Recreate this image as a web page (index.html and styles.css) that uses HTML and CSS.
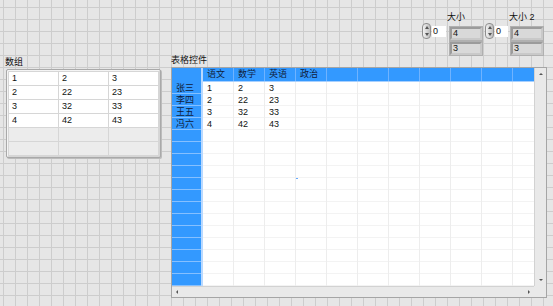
FILE: index.html
```html
<!DOCTYPE html>
<html lang="zh">
  <head>
    <meta charset="UTF-8" />
    <title>前面板</title>
    <link rel="stylesheet" href="styles.css">
  </head>
  <body>
    <div class="panel">

      <!-- 大小 -->
      <div class="ctl size-ctl size-a">
        <div class="caption size-cap">大小</div>
        <div class="size-row">
          <div class="spin"><span class="up"></span><span class="down"></span></div>
          <div class="numbox">0</div>
          <div class="disp-col">
            <div class="disp">4</div>
            <div class="disp">3</div>
          </div>
        </div>
      </div>

      <!-- 大小 2 -->
      <div class="ctl size-ctl size-b">
        <div class="caption size-cap">大小 2</div>
        <div class="size-row">
          <div class="spin"><span class="up"></span><span class="down"></span></div>
          <div class="numbox">0</div>
          <div class="disp-col">
            <div class="disp">4</div>
            <div class="disp">3</div>
          </div>
        </div>
      </div>

      <!-- 数组 -->
      <div class="ctl array-ctl">
        <div class="caption">数组</div>
        <div class="array-frame">
          <div class="array-grid">
            <div class="cell">1</div><div class="cell">2</div><div class="cell">3</div>
            <div class="cell">2</div><div class="cell">22</div><div class="cell">23</div>
            <div class="cell">3</div><div class="cell">32</div><div class="cell">33</div>
            <div class="cell">4</div><div class="cell">42</div><div class="cell">43</div>
            <div class="cell empty"></div><div class="cell empty"></div><div class="cell empty"></div>
            <div class="cell empty"></div><div class="cell empty"></div><div class="cell empty"></div>
          </div>
        </div>
      </div>

      <!-- 表格控件 -->
      <div class="ctl table-ctl">
        <div class="caption">表格控件</div>
        <div class="table">
          <div class="tbl-main">
            <div class="row-heads">
              <div class="rh corner"></div>
              <div class="rh">张三</div>
              <div class="rh">李四</div>
              <div class="rh">王五</div>
              <div class="rh">冯六</div>
              <div class="rh"></div><div class="rh"></div><div class="rh"></div>
              <div class="rh"></div><div class="rh"></div><div class="rh"></div>
              <div class="rh"></div><div class="rh"></div><div class="rh"></div>
              <div class="rh"></div><div class="rh"></div><div class="rh"></div>
              <div class="rh"></div>
            </div>
            <div class="tbl-body">
              <div class="col-heads">
                <div class="ch">语文</div><div class="ch">数学</div><div class="ch">英语</div>
                <div class="ch">政治</div><div class="ch"></div><div class="ch"></div>
                <div class="ch"></div><div class="ch"></div><div class="ch"></div>
                <div class="ch"></div><div class="ch"></div>
              </div>
              <div class="tbl-row"><div>1</div><div>2</div><div>3</div></div>
              <div class="tbl-row"><div>2</div><div>22</div><div>23</div></div>
              <div class="tbl-row"><div>3</div><div>32</div><div>33</div></div>
              <div class="tbl-row"><div>4</div><div>42</div><div>43</div></div>
              <span class="dot"></span>
            </div>
          </div>
          <div class="vscroll"><span class="arr-up"></span><span class="arr-down"></span></div>
          <div class="hscroll"><span class="arr-left"></span><span class="arr-right"></span></div>
          <div class="corner-box"></div>
        </div>
      </div>

    </div>
  </body>
</html>
```

FILE: styles.css
```css
html, body {
  margin: 0;
  padding: 0;
}
body {
  width: 553px;
  height: 306px;
  overflow: hidden;
  font-family: "Liberation Sans", "Noto Sans CJK SC", sans-serif;
  font-size: 9px;
  color: #111;
  background-color: #e6e6e6;
  background-image:
    linear-gradient(to right, #cdcdcd 1px, transparent 1px),
    linear-gradient(to bottom, #cdcdcd 1px, transparent 1px);
  background-size: 12px 12px;
  background-position: 3px 7px;
}
.panel {
  position: relative;
  width: 553px;
  height: 306px;
}

/* controls sit on the free front panel canvas */
.ctl {
  position: absolute;
}
.caption {
  height: 13px;
  line-height: 13px;
  white-space: nowrap;
}

/* size controls */
.size-a { left: 422px; top: 11px; }
.size-b { left: 485px; top: 11px; }
.size-cap {
  margin-left: 25px;
  height: 12px;
  line-height: 12px;
}
.size-b .size-cap { margin-left: 24px; }
.size-row {
  display: flex;
  align-items: flex-start;
}
.spin {
  width: 7px;
  height: 14px;
  border: 1px solid #8f8f8f;
  border-radius: 4px;
  background: linear-gradient(to right, #f2f2f2, #bdbdbd);
  display: flex;
  flex-direction: column;
  align-items: center;
  justify-content: space-around;
}
.spin .up {
  width: 0;
  height: 0;
  border-left: 2px solid transparent;
  border-right: 2px solid transparent;
  border-bottom: 3px solid #555;
}
.spin .down {
  width: 0;
  height: 0;
  border-left: 2px solid transparent;
  border-right: 2px solid transparent;
  border-top: 3px solid #555;
}
.numbox {
  width: 13px;
  height: 11px;
  margin: 3px 0 0 1px;
  padding-left: 1px;
  background: #fff;
  line-height: 11px;
}
.size-b .numbox { width: 12px; }
.disp-col {
  display: flex;
  flex-direction: column;
  gap: 2px;
  margin: 4px 0 0 4px;
}
.size-b .disp-col { margin-left: 3px; }
.disp {
  width: 27px;
  height: 9px;
  line-height: 9px;
  padding-left: 1px;
  border: 2px solid;
  border-color: #9b9b9b #c9c9c9 #c9c9c9 #9b9b9b;
  outline: 1px solid #b0b0b0;
  background: #d9d9d9;
}

/* array */
.array-ctl { left: 5px; top: 56px; }
.array-frame {
  margin-left: 1px;
  width: 149px;
  padding: 2px;
  border: 1px solid #a9a9a9;
  border-radius: 2px;
  background: #d6d6d6;
  box-shadow: 1px 1px 0 #bcbcbc, inset 1px 1px 0 #f4f4f4;
}
.array-grid {
  display: grid;
  grid-template-columns: repeat(3, 49px);
  grid-auto-rows: 13px;
  gap: 1px;
}
.cell {
  background: #fff;
  padding-left: 3px;
  line-height: 13px;
}
.cell.empty {
  background: #ececec;
}

/* table */
.table-ctl { left: 171px; top: 54px; }
.table {
  display: grid;
  grid-template-columns: 362px 12px;
  grid-template-rows: 218px 11px;
  width: 374px;
  border: 1px solid #a5a5a5;
  background: #e9e9e9;
}
.tbl-main {
  display: flex;
  overflow: hidden;
  background: #fff;
}
.row-heads {
  width: 29px;
  flex: none;
  border-right: 2px solid #b9d9ff;
  display: flex;
  flex-direction: column;
}
.rh {
  height: 11px;
  line-height: 12px;
  overflow: hidden;
  padding-left: 4px;
  background: #3399ff;
  border-bottom: 1px solid #86c0ff;
  color: #10203a;
}
.rh.corner {
  height: 13px;
  border-bottom: 1px solid #3399ff;
}
.tbl-body {
  position: relative;
  flex: 1;
  overflow: hidden;
  background-image:
    linear-gradient(to right, transparent 30px, #ededed 30px),
    linear-gradient(to bottom, transparent 11px, #f3f3f3 11px);
  background-size: 31px 12px, 31px 12px;
  background-position: 0 14px, 0 14px;
}
.col-heads {
  display: grid;
  grid-template-columns: repeat(11, 31px);
  height: 14px;
  background: #3399ff;
  border-bottom: 1px solid #a7d0ff;
  box-sizing: border-box;
}
.ch {
  line-height: 13px;
  padding-left: 4px;
  border-right: 1px solid #6fb3ff;
  color: #10203a;
  white-space: nowrap;
}
.tbl-row {
  display: grid;
  grid-template-columns: repeat(3, 31px);
  height: 12px;
  line-height: 12px;
}
.tbl-row div {
  padding-left: 4px;
}
.dot {
  position: absolute;
  left: 93px;
  top: 110px;
  width: 2px;
  height: 1px;
  background: #66aaff;
}
.vscroll {
  position: relative;
  border-left: 1px solid #d2d2d2;
}
.hscroll {
  position: relative;
  border-top: 1px solid #d2d2d2;
}
.arr-up, .arr-down, .arr-left, .arr-right {
  position: absolute;
  width: 0;
  height: 0;
}
.arr-up {
  left: 4px;
  top: 5px;
  border-left: 2px solid transparent;
  border-right: 2px solid transparent;
  border-bottom: 2px solid #555;
}
.arr-down {
  left: 4px;
  bottom: 5px;
  border-left: 2px solid transparent;
  border-right: 2px solid transparent;
  border-top: 2px solid #555;
}
.arr-left {
  left: 4px;
  top: 3px;
  border-top: 2px solid transparent;
  border-bottom: 2px solid transparent;
  border-right: 2px solid #555;
}
.arr-right {
  right: 4px;
  top: 3px;
  border-top: 2px solid transparent;
  border-bottom: 2px solid transparent;
  border-left: 2px solid #555;
}
.corner-box {
  background: #e9e9e9;
}
```
